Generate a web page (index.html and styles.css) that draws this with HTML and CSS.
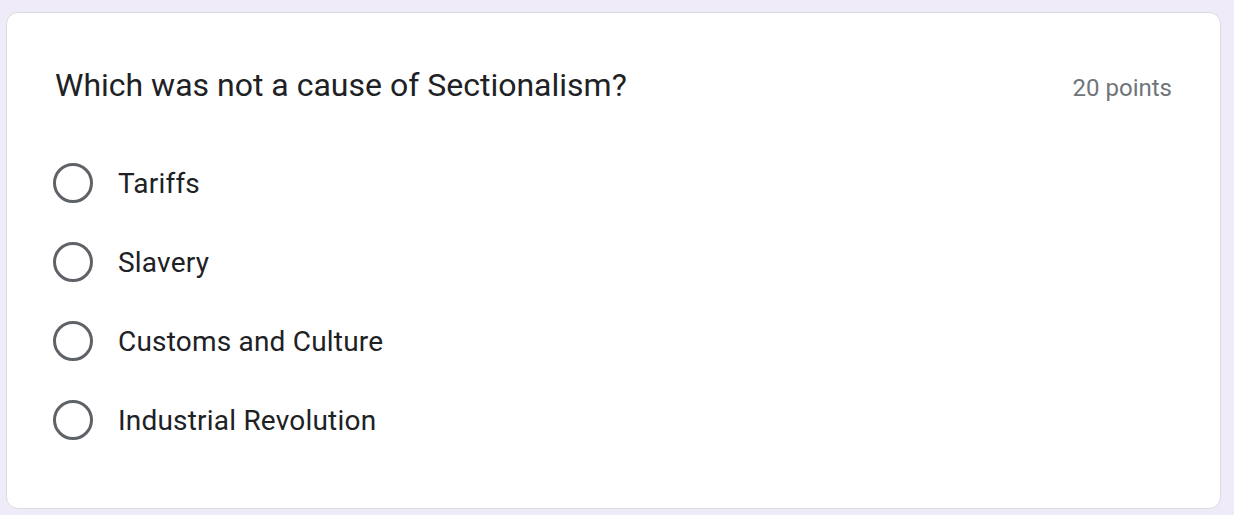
FILE: index.html
```html
<!DOCTYPE html>
<html>
<head>
<meta charset="utf-8">
<link rel="stylesheet" href="styles.css">
</head>
<body>
<div class="card">
  <div class="header">
    <div class="title">Which was not a cause of Sectionalism?</div>
    <div class="points">20 points</div>
  </div>
  <div class="options">
    <div class="option"><span class="radio"></span><span class="label">Tariffs</span></div>
    <div class="option"><span class="radio"></span><span class="label">Slavery</span></div>
    <div class="option"><span class="radio"></span><span class="label">Customs and Culture</span></div>
    <div class="option"><span class="radio"></span><span class="label">Industrial Revolution</span></div>
  </div>
</div>
</body>
</html>
```
FILE: styles.css
```css
html, body {
  margin: 0;
  padding: 0;
  background: #f0ebf8;
  height: 100%;
  overflow: hidden;
}
.card {
  box-sizing: border-box;
  margin: 12px 0 0 6px;
  width: 1215px;
  height: 497px;
  background: #fff;
  border: 1px solid #dadce0;
  border-radius: 12px;
  padding: 52px 48px 0 48px;
}
.header {
  display: flex;
  justify-content: space-between;
  align-items: baseline;
}
.title {
  font-family: Roboto, "Liberation Sans", sans-serif;
  font-size: 32px;
  line-height: 40px;
  color: #202124;
}
.points {
  font-family: Roboto, "Liberation Sans", sans-serif;
  font-size: 24px;
  line-height: 36px;
  color: #70757a;
}
.options {
  margin-top: 57px;
  display: flex;
  flex-direction: column;
  gap: 39px;
}
.option {
  display: flex;
  align-items: center;
  height: 40px;
}
.radio {
  box-sizing: border-box;
  width: 40px;
  height: 40px;
  margin-left: -2px;
  border: 3px solid #5f6368;
  border-radius: 50%;
  flex: none;
}
.label {
  margin-left: 25px;
  font-family: Roboto, "Liberation Sans", sans-serif;
  font-size: 28px;
  letter-spacing: 0.2px;
  color: #202124;
}
```
